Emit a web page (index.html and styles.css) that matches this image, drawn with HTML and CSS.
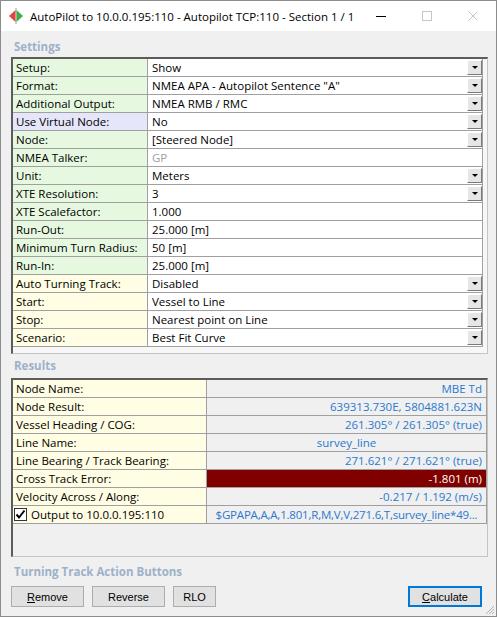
FILE: index.html
```html
<!DOCTYPE html>
<html lang="en">
<head>
    <meta charset="UTF-8">
    <title>AutoPilot to 10.0.0.195:110</title>
    <link rel="stylesheet" href="styles.css">
</head>
<body>
<div class="window">
    <div class="titlebar">
        <svg class="app-icon" width="16" height="16" viewBox="0 0 16 16">
            <polygon points="7.5,2 7.5,14 1,8" fill="#e8443a"/>
            <polygon points="8.5,2 8.5,14 15,8" fill="#3cb043"/>
            <rect x="7.5" y="0" width="1" height="16" fill="#9a9a9a"/>
        </svg>
        <span class="title">AutoPilot to 10.0.0.195:110 - Autopilot TCP:110 - Section 1 / 1</span>
        <div class="controls">
            <span class="ctl"><svg width="10" height="10" viewBox="0 0 10 10"><rect x="0" y="5" width="10" height="1" fill="#000"/></svg></span>
            <span class="ctl"><svg width="10" height="10" viewBox="0 0 10 10"><rect x="0.5" y="0.5" width="9" height="9" fill="none" stroke="#c6c6c6"/></svg></span>
            <span class="ctl"><svg width="10" height="10" viewBox="0 0 10 10"><path d="M0.5 0.5 L9.5 9.5 M9.5 0.5 L0.5 9.5" stroke="#c6c6c6" stroke-width="1"/></svg></span>
        </div>
    </div>

    <div class="content">
        <div class="group-title">Settings</div>
        <div class="panel settings">
            <div class="row green"><div class="label">Setup:</div><div class="value"><span class="text">Show</span><span class="drop"></span></div></div>
            <div class="row green"><div class="label">Format:</div><div class="value"><span class="text">NMEA APA - Autopilot Sentence "A"</span><span class="drop"></span></div></div>
            <div class="row green"><div class="label">Additional Output:</div><div class="value"><span class="text">NMEA RMB / RMC</span><span class="drop"></span></div></div>
            <div class="row lavender"><div class="label">Use Virtual Node:</div><div class="value"><span class="text">No</span><span class="drop"></span></div></div>
            <div class="row green"><div class="label">Node:</div><div class="value"><span class="text">[Steered Node]</span><span class="drop"></span></div></div>
            <div class="row green"><div class="label">NMEA Talker:</div><div class="value"><span class="text muted">GP</span></div></div>
            <div class="row green"><div class="label">Unit:</div><div class="value"><span class="text">Meters</span><span class="drop"></span></div></div>
            <div class="row green"><div class="label">XTE Resolution:</div><div class="value"><span class="text">3</span><span class="drop"></span></div></div>
            <div class="row green"><div class="label">XTE Scalefactor:</div><div class="value"><span class="text">1.000</span></div></div>
            <div class="row green"><div class="label">Run-Out:</div><div class="value"><span class="text">25.000 [m]</span></div></div>
            <div class="row green"><div class="label">Minimum Turn Radius:</div><div class="value"><span class="text">50 [m]</span></div></div>
            <div class="row green"><div class="label">Run-In:</div><div class="value"><span class="text">25.000 [m]</span></div></div>
            <div class="row yellow"><div class="label">Auto Turning Track:</div><div class="value"><span class="text">Disabled</span><span class="drop"></span></div></div>
            <div class="row yellow"><div class="label">Start:</div><div class="value"><span class="text">Vessel to Line</span><span class="drop"></span></div></div>
            <div class="row yellow"><div class="label">Stop:</div><div class="value"><span class="text">Nearest point on Line</span><span class="drop"></span></div></div>
            <div class="row yellow"><div class="label">Scenario:</div><div class="value"><span class="text">Best Fit Curve</span><span class="drop"></span></div></div>
        </div>

        <div class="group-title">Results</div>
        <div class="panel results">
            <div class="row"><div class="label">Node Name:</div><div class="value">MBE Td</div></div>
            <div class="row"><div class="label">Node Result:</div><div class="value">639313.730E, 5804881.623N</div></div>
            <div class="row"><div class="label">Vessel Heading / COG:</div><div class="value">261.305° / 261.305° (true)</div></div>
            <div class="row"><div class="label">Line Name:</div><div class="value center">survey_line</div></div>
            <div class="row"><div class="label">Line Bearing / Track Bearing:</div><div class="value">271.621° / 271.621° (true)</div></div>
            <div class="row"><div class="label">Cross Track Error:</div><div class="value alarm">-1.801 (m)</div></div>
            <div class="row"><div class="label">Velocity Across / Along:</div><div class="value">-0.217 / 1.192 (m/s)</div></div>
            <div class="row">
                <div class="label check-label">
                    <span class="checkbox"><svg width="11" height="11" viewBox="0 0 11 11"><path d="M1.5 5.5 L4 8.5 L9.5 1.5" fill="none" stroke="#000" stroke-width="2"/></svg></span>
                    Output to 10.0.0.195:110
                </div>
                <div class="value center clip">$GPAPA,A,A,1.801,R,M,V,V,271.6,T,survey_line*49...</div>
            </div>
        </div>

        <div class="group-title">Turning Track Action Buttons</div>
        <div class="buttons">
            <button class="btn wide"><u>R</u>emove</button>
            <button class="btn wide">Reverse</button>
            <button class="btn small">RLO</button>
            <button class="btn wide default"><u>C</u>alculate</button>
        </div>
    </div>

    <svg class="grip" width="10" height="10" viewBox="0 0 10 10">
        <path d="M9 1 L1 9 M9 4 L4 9 M9 7 L7 9" stroke="#b0b0b0" stroke-width="1"/>
    </svg>
</div>
</body>
</html>
```

FILE: styles.css
```css
body {
    margin: 0;
    padding: 0;
    background-color: #ffffff;
}

.window {
    position: relative;
    width: 497px;
    height: 617px;
    box-sizing: border-box;
    border: 1px solid #8c8c8c;
    background-color: #f0f0f0;
    font-family: 'Open Sans', 'Noto Sans', sans-serif;
    font-size: 11.5px;
    color: #000;
    overflow: hidden;
}

/* title bar */
.titlebar {
    height: 30px;
    background-color: #fff;
    display: flex;
    align-items: center;
}

.app-icon {
    margin-left: 7px;
    flex-shrink: 0;
}

.title {
    margin-left: 6px;
    font-size: 11.5px;
    white-space: nowrap;
}

.controls {
    margin-left: auto;
    display: flex;
    height: 30px;
}

.ctl {
    width: 46px;
    height: 30px;
    display: flex;
    justify-content: center;
    align-items: center;
}

/* content */
.content {
    padding: 0 8px 0 10px;
}

.group-title {
    font-weight: bold;
    font-size: 11.5px;
    color: #9db1c9;
    line-height: 16px;
    padding: 8px 0 0 3px;
    margin-bottom: 2px;
}

.panel {
    border-style: solid;
    border-width: 2px 1px 1px 2px;
    border-color: #5c5c5c #c4c4c4 #c4c4c4 #5c5c5c;
    box-sizing: border-box;
}

.panel.settings {
    height: 297px;
    background-color: #f7f7f7;
}

.panel.results {
    height: 179px;
    background-color: #f0f0f0;
}

.panel + .group-title {
    padding-top: 4px;
    margin-bottom: 4px;
}

.results + .group-title {
    padding-top: 7px;
    margin-bottom: 6px;
}

.row {
    display: grid;
    height: 18px;
    box-sizing: border-box;
    border-bottom: 1px solid #a0a0a0;
    border-right: 1px solid #a0a0a0;
    line-height: 17px;
}

.settings .row {
    width: 470px;
    grid-template-columns: 135px 1fr;
}

.results .row {
    grid-template-columns: 194px 1fr;
}

.label {
    border-right: 1px solid #a0a0a0;
    padding-left: 3px;
    white-space: nowrap;
    overflow: hidden;
}

.row.green .label { background-color: #e6f9e0; }
.row.lavender .label { background-color: #e6e6fa; }
.row.yellow .label { background-color: #fffde3; }
.results .label { background-color: #fffde3; }

.settings .value {
    background-color: #fff;
    display: flex;
    padding-left: 4px;
    min-width: 0;
}

.value .text {
    flex: 1;
    white-space: nowrap;
    overflow: hidden;
}

.value .muted {
    color: #a0a0a0;
}

.drop {
    width: 15px;
    height: 15px;
    margin-top: 1px;
    box-sizing: border-box;
    background-color: #e6e6e6;
    border-style: solid;
    border-width: 1px;
    border-color: #fff #7a7a7a #7a7a7a #fff;
    display: flex;
    justify-content: center;
    align-items: center;
}

.drop::after {
    content: '';
    width: 0;
    height: 0;
    border-left: 3px solid transparent;
    border-right: 3px solid transparent;
    border-top: 3px solid #000;
}

.results .value {
    color: #2a78cf;
    text-align: right;
    padding-right: 4px;
    white-space: nowrap;
    overflow: hidden;
}

.results .value.center {
    text-align: center;
    padding: 0;
}

.results .value.clip {
    text-overflow: clip;
    letter-spacing: -0.2px;
}

.results .value.alarm {
    background-color: #800000;
    color: #fff;
}

.check-label {
    display: flex;
    align-items: center;
    gap: 4px;
    padding-left: 1px;
}

.checkbox {
    width: 13px;
    height: 13px;
    box-sizing: border-box;
    border: 1px solid #333;
    background-color: #fff;
    display: flex;
    justify-content: center;
    align-items: center;
}

/* buttons */
.buttons {
    display: flex;
    gap: 8px;
}

.btn {
    height: 21px;
    box-sizing: border-box;
    background-color: #e1e1e1;
    border: 1px solid #adadad;
    font-family: 'Liberation Sans', Arial, sans-serif;
    font-size: 11px;
    color: #000;
    padding: 0;
}

.btn.wide { width: 73px; }
.btn.small { width: 43px; }

.btn.default {
    margin-left: auto;
    margin-right: 6px;
    width: 74px;
    border: 2px solid #0078d7;
}

.grip {
    position: absolute;
    right: 1px;
    bottom: 1px;
}
```
